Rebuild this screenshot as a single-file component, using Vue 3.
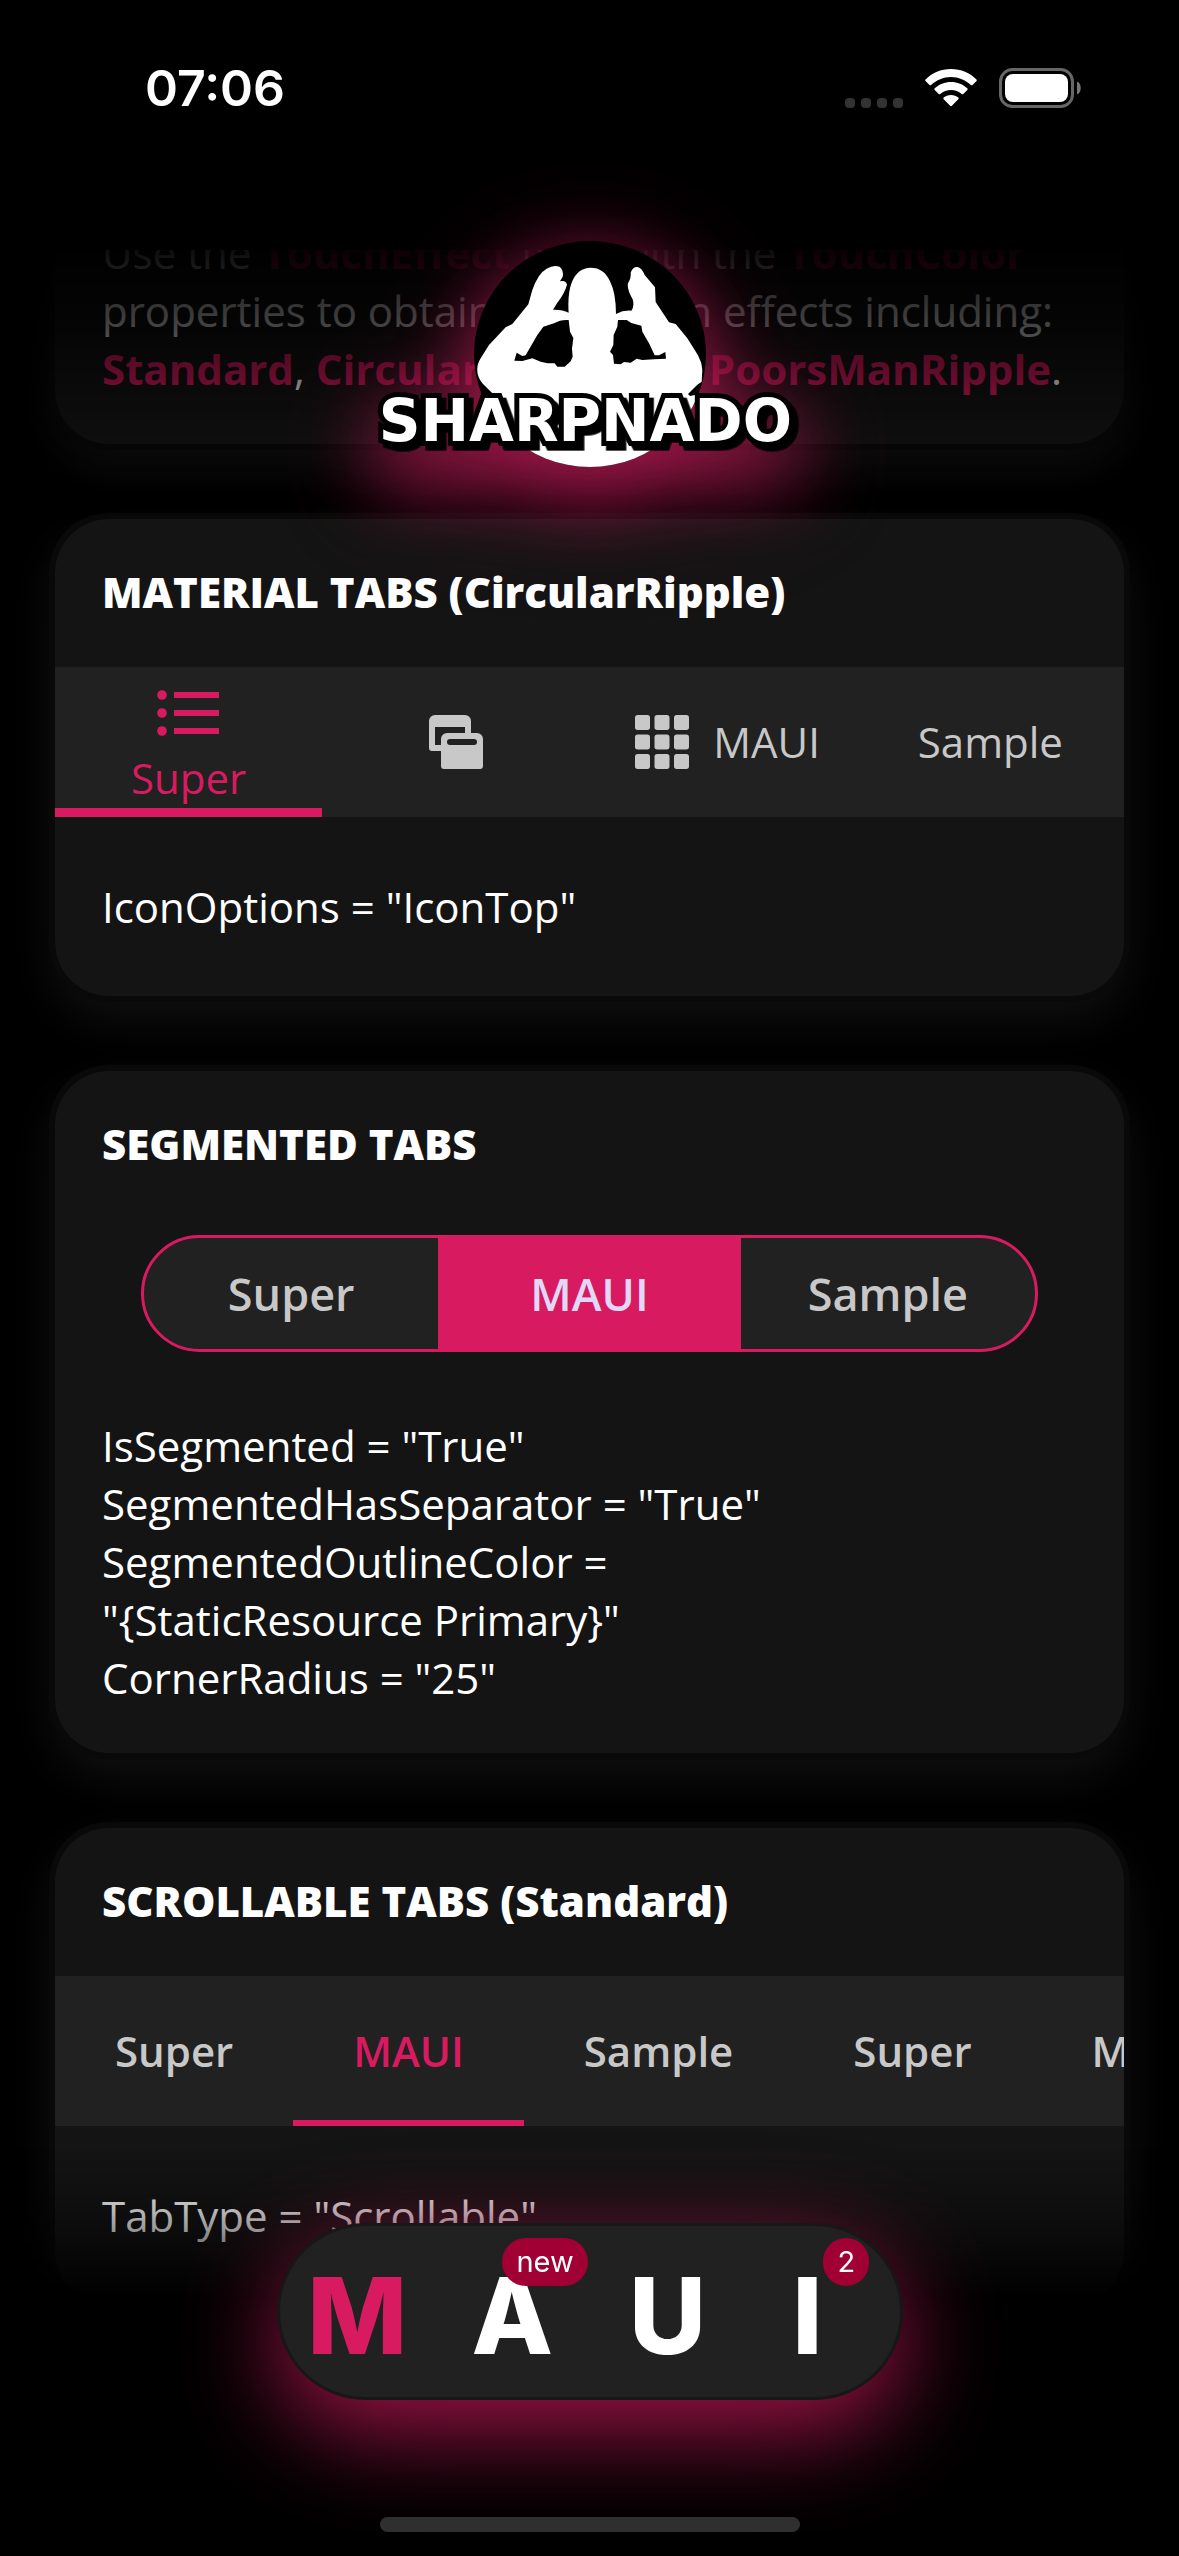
<script setup>
import { ref } from 'vue'

const materialTab = ref(0)
const segment = ref(1)
const segments = ['Super', 'MAUI', 'Sample']
const scrollTab = ref(1)
const scrollTabs = ['Super', 'MAUI', 'Sample', 'Super', 'MAUI']
const page = ref(0)
const pages = [
  { letter: 'M' },
  { letter: 'A', badge: 'new' },
  { letter: 'U' },
  { letter: 'I', badge: '2' },
]
const gridCells = [3, 9.5, 16]
</script>

<template>
  <div class="screen">
    <main class="list">
      <section class="card intro">
        <p>
          Use the <strong>TouchEffect</strong> type with the <strong>TouchColor</strong><br />
          properties to obtain the button effects including:<br />
          <strong>Standard</strong>, <strong>CircularRipple</strong> and <strong>PoorsManRipple</strong>.
        </p>
      </section>

      <section class="card">
        <h2>MATERIAL TABS (CircularRipple)</h2>
        <div class="strip" role="tablist">
          <button class="tab stacked" :class="{ active: materialTab === 0 }" role="tab" @click="materialTab = 0">
            <svg class="icon" viewBox="0 0 72 72" aria-hidden="true">
              <g v-for="y in [18, 36, 54]" :key="y">
                <circle cx="9" :cy="y" r="4.8" />
                <rect x="21" :y="y - 3" width="45" height="6" />
              </g>
            </svg>
            <span>Super</span>
          </button>
          <button class="tab" :class="{ active: materialTab === 1 }" role="tab" aria-label="Windows" @click="materialTab = 1">
            <svg class="icon" viewBox="0 0 24 24" aria-hidden="true">
              <path fill-rule="evenodd" d="M5 3h10a2 2 0 0 1 2 2v4h2a2 2 0 0 1 2 2v9a1 1 0 0 1-1 1H8a1 1 0 0 1-1-1v-5H4a1 1 0 0 1-1-1V5a2 2 0 0 1 2-2zM5 7v6h2v-2a2 2 0 0 1 2-2h6V7zM10 11a1 1 0 0 0 0 2h8a1 1 0 0 0 0-2z" />
            </svg>
          </button>
          <button class="tab" :class="{ active: materialTab === 2 }" role="tab" @click="materialTab = 2">
            <svg class="icon" viewBox="0 0 24 24" aria-hidden="true">
              <template v-for="y in gridCells" :key="y">
                <rect v-for="x in gridCells" :key="x" :x="x" :y="y" width="5" height="5" rx="0.9" />
              </template>
            </svg>
            <span>MAUI</span>
          </button>
          <button class="tab" :class="{ active: materialTab === 3 }" role="tab" @click="materialTab = 3">
            <span>Sample</span>
          </button>
        </div>
        <p class="body">IconOptions = "IconTop"</p>
      </section>

      <section class="card">
        <h2>SEGMENTED TABS</h2>
        <div class="segmented" role="tablist">
          <button
            v-for="(name, i) in segments"
            :key="name"
            role="tab"
            :class="{ active: segment === i }"
            @click="segment = i"
          >{{ name }}</button>
        </div>
        <p class="body props">
          IsSegmented = "True"<br />
          SegmentedHasSeparator = "True"<br />
          SegmentedOutlineColor =<br />
          "{StaticResource Primary}"<br />
          CornerRadius = "25"
        </p>
      </section>

      <section class="card">
        <h2>SCROLLABLE TABS (Standard)</h2>
        <div class="strip scrollable" role="tablist">
          <button
            v-for="(name, i) in scrollTabs"
            :key="i"
            class="tab"
            :class="{ active: scrollTab === i }"
            role="tab"
            @click="scrollTab = i"
          >{{ name }}</button>
        </div>
        <p class="body">TabType = "Scrollable"</p>
      </section>
    </main>

    <header class="top">
      <div class="status">
        <span class="clock">07:06</span>
        <div class="indicators">
          <svg width="58" height="10" viewBox="0 0 58 10" class="signal" aria-hidden="true">
            <rect v-for="x in [0, 16, 32, 48]" :key="x" :x="x" width="10" height="10" rx="4" />
          </svg>
          <svg width="52" height="38" viewBox="0 0 52 38" aria-hidden="true">
            <path fill="#fff" d="M26 0C36 0 45 4 51.500 10.500q.7.8 0 1.500L47.500 16q-.8.700-1.600 0C40.500 11 33.500 8 26 8S11.500 11 6.100 16q-.8.700-1.600 0L.500 12q-.7-.7 0-1.500C7 4 16 0 26 0z" />
            <path fill="#fff" d="M26 13c6.400 0 12 2.400 16.300 6.300q.8.800 0 1.600l-4 4q-.8.700-1.600 0C33.800 22.400 30 21 26 21s-7.800 1.400-10.700 3.900q-.8.700-1.600 0l-4-4q-.8-.8 0-1.600C14 15.400 19.600 13 26 13z" />
            <path fill="#fff" d="M26 26c2.900 0 5.400 1 7.300 2.600q.9.800 0 1.700L26.900 36.800q-.9.900-1.800 0L18.700 30.300q-.9-.9 0-1.700C20.600 27 23.100 26 26 26z" />
          </svg>
          <svg width="82" height="40" viewBox="0 0 82 40" aria-hidden="true">
            <rect x="1.500" y="1.500" width="72" height="37" rx="12" fill="none" stroke="#666" stroke-width="3" />
            <rect x="6" y="6" width="63" height="28" rx="8" fill="#fff" />
            <path d="M78 13.500c5 2 5 11 0 13z" fill="#777" />
          </svg>
        </div>
      </div>
      <svg class="logo" viewBox="94 93 1308 678" role="img" aria-label="Sharpnado">
        <clipPath id="disc"><ellipse cx="748" cy="432" rx="348" ry="339" /></clipPath>
        <g clip-path="url(#disc)">
          <rect x="394" y="90" width="710" height="690" fill="#000" />
          <path
            fill="#fff"
            fill-rule="evenodd"
            d="M462 565L455 550L425 520Q410 500 410 482Q408 465 420 445L445 405L495 352L515 342L563 283L575 240Q592 190 618 176Q640 163 658 171Q670 182 666 200L658 214Q675 209 679 224Q672 250 650 278L637 299Q665 298 684 308Q680 250 694 215Q712 173 750 173Q790 173 808 214Q826 250 826 312Q848 300 872 302Q882 290 876 268Q858 236 862 220Q872 206 870 188Q876 170 890 171Q903 173 912 195L943 232L945 276L985 337L1005 342L1040 385L1072 436Q1084 458 1085 480L1083 515L1070 524L1042 552L1048 558L1073 553L1068 566L1100 566V780H390V565Z
            M684 330Q660 328 640 340L608 350L590 375L555 436L545 438L528 428L521 452L545 453L575 445L600 455L620 460L642 460L650 470L672 470L690 454L696 440L694 416L698 384L688 365Z
            M832 330L858 330L872 339L902 347L905 365L925 400L942 436L955 436L974 426L976 446L940 448L905 450L888 446L870 458L850 456L840 463L820 461L817 435L808 425L818 405L819 375L830 350Z"
          />
        </g>
        <text class="wordmark" x="734" y="694" text-anchor="middle">SHARPNADO</text>
      </svg>
    </header>

    <footer class="bottom">
      <nav class="dock">
        <button
          v-for="(item, i) in pages"
          :key="item.letter"
          :class="{ active: page === i }"
          @click="page = i"
        >
          {{ item.letter }}<span v-if="item.badge" class="badge" :class="{ wide: item.badge.length > 1 }">{{ item.badge }}</span>
        </button>
      </nav>
      <div class="home-indicator"></div>
    </footer>
  </div>
</template>

<style>
body {
  margin: 0;
  background: #000;
}
</style>

<style scoped>
.screen {
  --pink: #d81b60;
  --muted: #c8c8c8;
  min-height: 100vh;
  overflow: hidden;
  background: #000;
  color: #fff;
  font: 400 42px/58px "Open Sans", "Noto Sans", sans-serif;
}

button {
  margin: 0;
  padding: 0;
  border: 0;
  background: none;
  color: inherit;
  font: inherit;
}

p,
h2 {
  margin: 0;
}

.list {
  display: flex;
  flex-direction: column;
  gap: 75px;
  padding: 200px 55px 250px;
}

.card {
  overflow: hidden;
  border-radius: 54px;
  background: #141414;
  box-shadow: 0 0 0 6px #090909, 0 20px 50px rgba(255, 255, 255, 0.07);
}

.intro {
  padding: 24px 47px 46px;
  white-space: nowrap;
}

.intro strong {
  color: var(--pink);
  font-weight: 700;
}

h2 {
  padding: 44px 47px 46px;
  font-size: 42px;
  font-weight: 800;
  line-height: 58px;
}

.body {
  padding: 61px 47px 60px;
}

.props {
  padding: 65px 47px 46px;
}

.strip {
  display: flex;
  height: 150px;
  background: #212121;
  color: var(--muted);
}

.tab {
  position: relative;
  display: flex;
  flex: 1 1 0;
  align-items: center;
  justify-content: center;
  gap: 15px;
}

.stacked {
  flex-direction: column;
  gap: 0;
}

.tab.active {
  color: var(--pink);
}

.tab.active::after {
  content: "";
  position: absolute;
  right: 0;
  bottom: 0;
  left: 0;
  height: 9px;
  background: var(--pink);
}

.icon {
  width: 72px;
  height: 72px;
  fill: currentColor;
}

.scrollable {
  overflow: hidden;
}

.scrollable .tab {
  flex: none;
  padding: 0 60px;
  font-weight: 600;
}

.scrollable .tab.active::after {
  height: 6px;
}

.segmented {
  display: grid;
  grid-template-columns: 38fr 39fr 38fr;
  height: 111px;
  margin: 16px 86px 0;
  overflow: hidden;
  border: 3px solid var(--pink);
  border-radius: 60px;
  background: #212121;
  color: var(--muted);
  font-size: 45px;
  font-weight: 600;
}

.segmented .active {
  background: var(--pink);
  color: #e1d8f7;
}

.top {
  position: fixed;
  inset: 0 0 auto;
  display: flex;
  flex-direction: column;
  align-items: center;
  height: 520px;
  background: linear-gradient(
    #000 250px,
    rgba(0, 0, 0, 0.95) 250px,
    rgba(0, 0, 0, 0.74) 325px,
    rgba(0, 0, 0, 0.5) 385px,
    rgba(0, 0, 0, 0.28) 440px,
    transparent 520px
  );
  pointer-events: none;
}

.status {
  display: flex;
  box-sizing: border-box;
  align-items: center;
  justify-content: space-between;
  width: 100%;
  height: 241px;
  padding: 0 98px 66px 145px;
}

.clock {
  font: 600 50px/60px Inter, sans-serif;
}

.indicators {
  display: flex;
  align-items: center;
  gap: 22px;
}

.signal {
  align-self: flex-end;
  fill: #333;
}

.logo {
  width: 436px;
  height: 226px;
  overflow: visible;
  filter: drop-shadow(0 30px 35px rgba(216, 27, 96, 0.55)) drop-shadow(0 10px 45px rgba(216, 27, 96, 0.45));
}

.wordmark {
  fill: #fff;
  stroke: #000;
  stroke-width: 30px;
  paint-order: stroke;
  font: 700 174px "DejaVu Sans", sans-serif;
  filter: drop-shadow(14px 14px 0 #000);
}

.bottom {
  position: fixed;
  inset: auto 0 0;
  display: flex;
  box-sizing: border-box;
  flex-direction: column;
  align-items: center;
  justify-content: space-between;
  height: 406px;
  padding: 73px 0 24px;
  background: linear-gradient(transparent, rgba(0, 0, 0, 0.28) 60px, rgba(0, 0, 0, 0.42) 82px, #000 150px);
}

.dock {
  display: grid;
  grid-template-columns: 5fr 5fr 5fr 4fr;
  box-sizing: border-box;
  width: 626px;
  height: 177px;
  padding: 8px 30px 0 0;
  border: 3px solid #171717;
  border-radius: 89px;
  background: #212121;
  box-shadow: 0 30px 100px rgba(216, 27, 96, 0.75);
  font: 800 106px/163px Inter, sans-serif;
}

.dock button {
  position: relative;
}

.dock .active {
  color: var(--pink);
}

.badge {
  position: absolute;
  top: 4px;
  left: calc(50% + 16px);
  box-sizing: border-box;
  min-width: 46px;
  height: 48px;
  border-radius: 24px;
  background: #a00034;
  color: #fff;
  font: 400 29px/48px Inter, sans-serif;
}

.badge.wide {
  left: calc(50% - 10px);
  padding: 0 14px;
}

.home-indicator {
  width: 420px;
  height: 15px;
  border-radius: 8px;
  background: #2f2f2f;
}
</style>
